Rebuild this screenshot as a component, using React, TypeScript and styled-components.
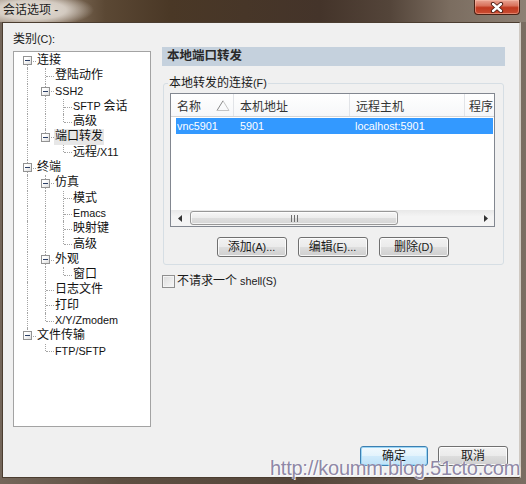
import React from 'react';
import styled, { createGlobalStyle, css } from 'styled-components';

const FONT = `"Liberation Sans", "Noto Sans CJK SC", sans-serif`;
const CJK_RE = /[\u2E80-\u9FFF\uFF00-\uFFEF\u3000-\u303F]/;
const CJK_SPLIT = /([\u2E80-\u9FFF\uFF00-\uFFEF\u3000-\u303F]+)/;

const GlobalStyle = createGlobalStyle`
  html, body { margin: 0; padding: 0; background: #ffffff; }
  body { font-family: ${FONT}; }
  * { box-sizing: border-box; }
`;

const Lat = styled.span`
  font-size: 0.9em;
`;

const T: React.FC<{ s: string }> = ({ s }) => {
  const parts = s.split(CJK_SPLIT).filter(Boolean);
  return (
    <>
      {parts.map((p, i) =>
        CJK_RE.test(p) ? <React.Fragment key={i}>{p}</React.Fragment> : <Lat key={i}>{p}</Lat>
      )}
    </>
  );
};

/* ---------- window frame ---------- */

const Window = styled.div`
  position: relative;
  width: 526px;
  height: 484px;
  display: flex;
  flex-direction: column;
  background: linear-gradient(90deg, #74665a 0, #5e4f42 120px, #55463a 300px, #6a5c50 440px, #7a6d62 526px);
  overflow: hidden;
  font-family: ${FONT};
  color: #1a1a1a;
`;

const TitleBar = styled.div`
  height: 22px;
  flex: none;
  display: flex;
  align-items: flex-start;
  justify-content: space-between;
  background:
    radial-gradient(ellipse 62px 17px at 32px 10px, rgba(232, 226, 218, 0.98) 0%, rgba(225, 218, 210, 0.85) 55%, rgba(225, 218, 210, 0) 100%),
    linear-gradient(90deg, #9c8c7c 0, #85725f 60px, #5b4834 105px, #4a3826 170px, #44342a 320px, #54453a 390px, #7b6d60 450px, #8d8175 526px);
`;

const TitleText = styled.div`
  padding-left: 3px;
  font-size: 12px;
  line-height: 20px;
  color: #1c1c1c;
`;

const CloseButton = styled.div`
  width: 46px;
  height: 15px;
  margin-right: 6px;
  display: flex;
  align-items: center;
  justify-content: center;
  border: 1px solid #4a2014;
  border-top: none;
  border-radius: 0 0 4px 4px;
  background: linear-gradient(#e9a493 0%, #d9735d 40%, #c0391f 55%, #c94d33 100%);
  box-shadow: inset 0 0 0 1px rgba(255, 200, 180, 0.45);
`;

const Client = styled.div`
  flex: 1;
  margin: 0 5px 6px 2px;
  border: 1px solid #4b3d30;
  border-right: 2px solid #cfc9c2;
  background: #f0f0f0;
  display: flex;
  flex-direction: column;
  padding: 9px 11px 11px 10px;
`;

const Main = styled.div`
  height: 395px;
  display: flex;
  gap: 11px;
`;

/* ---------- left: category tree ---------- */

const LeftCol = styled.div`
  width: 138px;
  flex: none;
  display: flex;
  flex-direction: column;
`;

const CatLabel = styled.div`
  font-size: 12px;
  line-height: 14px;
  height: 14px;
  margin-bottom: 5px;
`;

const Tree = styled.div`
  flex: 1;
  border: 1px solid #a3a3a3;
  background: #ffffff;
  padding: 1px 0 0 4px;
  font-size: 12px;
`;

const TreeRow = styled.div`
  display: flex;
  height: 15.3px;
  line-height: 15.3px;
`;

const lineColor = '#a4a4a4';

const Guide = styled.div<{ $line: boolean }>`
  position: relative;
  width: 18px;
  flex: none;
  ${(p) =>
    p.$line &&
    css`
      &::before {
        content: '';
        position: absolute;
        left: 9px;
        top: 0;
        bottom: 0;
        border-left: 1px dotted ${lineColor};
      }
    `}
`;

const Connector = styled.div<{ $top: boolean; $bottom: boolean }>`
  position: relative;
  width: 18px;
  flex: none;
  display: flex;
  align-items: center;
  justify-content: center;
  &::before {
    content: '';
    position: absolute;
    left: 9px;
    top: ${(p) => (p.$top ? '0' : '50%')};
    bottom: ${(p) => (p.$bottom ? '0' : '50%')};
    border-left: 1px dotted ${lineColor};
  }
  &::after {
    content: '';
    position: absolute;
    left: 10px;
    right: 0;
    top: 50%;
    border-top: 1px dotted ${lineColor};
  }
`;

const Expander = styled.span`
  position: relative;
  z-index: 1;
  width: 9px;
  height: 9px;
  margin-left: 1px;
  border: 1px solid #939393;
  background: linear-gradient(135deg, #ffffff 30%, #dcdcdc 100%);
  display: flex;
  align-items: center;
  justify-content: center;
  &::after {
    content: '';
    width: 5px;
    height: 1px;
    background: #2b3f66;
  }
`;

const NodeLabel = styled.span<{ $selected: boolean }>`
  padding: 0 1px;
  white-space: nowrap;
  color: #111;
  ${(p) =>
    p.$selected &&
    css`
      background: #e7e7e7;
    `}
`;

/* ---------- right panel ---------- */

const RightCol = styled.div`
  width: 343px;
  flex: none;
  padding-top: 15px;
  display: flex;
  flex-direction: column;
`;

const PanelHeader = styled.div`
  height: 19px;
  line-height: 19px;
  padding-left: 5px;
  background: #c5d1dd;
  font-size: 12.5px;
  font-weight: 600;
  color: #2a2a2a;
`;

const Group = styled.fieldset`
  margin: 10px 0 0 1px;
  width: 341px;
  border: 1px solid #d6dee4;
  border-radius: 3px;
  padding: 3px 8px 7px 6px;
  min-width: 0;
`;

const Legend = styled.legend`
  padding: 0 1px;
  margin-left: -2px;
  font-size: 12px;
  line-height: 14px;
`;

const ListView = styled.div`
  width: 325px;
  height: 134px;
  border: 1px solid #828790;
  background: #ffffff;
  display: flex;
  flex-direction: column;
`;

const HeaderRow = styled.div`
  display: grid;
  grid-template-columns: 63px 116px 115px 1fr;
  height: 23px;
  border-bottom: 1px solid #d5d5d5;
  background: linear-gradient(#ffffff, #f6f7f9);
`;

const HeaderCell = styled.div`
  display: flex;
  align-items: center;
  justify-content: space-between;
  padding: 0 3px 0 6px;
  border-right: 1px solid #e2e4e8;
  font-size: 12px;
  color: #333;
  white-space: nowrap;
  overflow: hidden;
  &:last-child {
    border-right: none;
    padding-left: 4px;
  }
`;

const DataRow = styled.div`
  display: grid;
  grid-template-columns: 58px 116px 115px 1fr;
  height: 16px;
  line-height: 16px;
  margin: 1px 1px 0 5px;
  background: #3399ff;
  color: #ffffff;
  font-size: 12px;
`;

const DataCell = styled.div<{ $pad: number }>`
  padding-left: ${(p) => p.$pad}px;
  white-space: nowrap;
  overflow: hidden;
`;

const ListBody = styled.div`
  flex: 1;
`;

const HScroll = styled.div`
  height: 16px;
  display: flex;
  align-items: center;
  background: linear-gradient(#e8e8e8, #f4f4f4 40%, #f4f4f4);
`;

const ScrollArrow = styled.div`
  width: 17px;
  height: 16px;
  flex: none;
  display: flex;
  align-items: center;
  justify-content: center;
`;

const Track = styled.div`
  flex: 1;
  height: 16px;
  display: flex;
  align-items: center;
  padding-left: 2px;
`;

const Thumb = styled.div`
  width: 208px;
  height: 14px;
  border: 1px solid #979797;
  border-radius: 3px;
  background: linear-gradient(#f7f7f7, #ececec 50%, #dedede 51%, #d6d6d6);
  box-shadow: inset 0 0 0 1px rgba(255, 255, 255, 0.7);
  display: flex;
  align-items: center;
  justify-content: center;
`;

const ButtonRow = styled.div<{ $justify: string; $gap: number; $mt: number }>`
  display: flex;
  justify-content: ${(p) => p.$justify};
  gap: ${(p) => p.$gap}px;
  margin-top: ${(p) => p.$mt}px;
`;

const Button = styled.div<{ $w: number; $default?: boolean }>`
  width: ${(p) => p.$w}px;
  height: 20px;
  border: 1px solid #707070;
  border-radius: 3px;
  background: linear-gradient(#f2f2f2 0%, #ebebeb 48%, #dddddd 52%, #cfcfcf 100%);
  box-shadow: inset 0 0 0 1px rgba(255, 255, 255, 0.8);
  font-size: 12px;
  line-height: 18px;
  text-align: center;
  color: #1a1a1a;
  ${(p) =>
    p.$default &&
    css`
      border-color: #3c7fb1;
      background: linear-gradient(#f1f9fe 0%, #e3f3fc 48%, #cfeafb 52%, #bfe2f7 100%);
      box-shadow: inset 0 0 0 1px #9cd6f5;
    `}
`;

const CheckRow = styled.div`
  display: flex;
  align-items: center;
  margin-top: 9px;
  font-size: 12px;
  line-height: 14px;
`;

const CheckBox = styled.span`
  width: 13px;
  height: 13px;
  flex: none;
  border: 1px solid #8f8f8f;
  background: linear-gradient(135deg, #dcdcdc, #f8f8f8);
  box-shadow: inset 0 0 0 1px #f4f4f4;
  margin-right: 2px;
`;

const Watermark = styled.div`
  position: absolute;
  left: 270px;
  top: 458px;
  font-family: "Liberation Sans", Arial, sans-serif;
  font-size: 20px;
  line-height: 20px;
  letter-spacing: -0.25px;
  color: #8f88a6;
  text-shadow: 1px 1px 0 rgba(255, 255, 255, 0.85), -1px 0 0 rgba(255, 255, 255, 0.6);
  white-space: nowrap;
  pointer-events: none;
`;

/* ---------- data ---------- */

type TreeNode = { label: string; selected?: boolean; children?: TreeNode[] };
type FlatRow = { node: TreeNode; guides: boolean[]; firstRoot: boolean; last: boolean };

const TREE: TreeNode[] = [
  {
    label: '连接',
    children: [
      { label: '登陆动作' },
      { label: 'SSH2', children: [{ label: 'SFTP 会话' }, { label: '高级' }] },
      { label: '端口转发', selected: true, children: [{ label: '远程/X11' }] },
    ],
  },
  {
    label: '终端',
    children: [
      {
        label: '仿真',
        children: [{ label: '模式' }, { label: 'Emacs' }, { label: '映射键' }, { label: '高级' }],
      },
      { label: '外观', children: [{ label: '窗口' }] },
      { label: '日志文件' },
      { label: '打印' },
      { label: 'X/Y/Zmodem' },
    ],
  },
  { label: '文件传输', children: [{ label: 'FTP/SFTP' }] },
];

function flatten(nodes: TreeNode[], level = 0, guides: boolean[] = [], out: FlatRow[] = []): FlatRow[] {
  nodes.forEach((n, i) => {
    const last = i === nodes.length - 1;
    out.push({ node: n, guides, firstRoot: level === 0 && i === 0, last });
    if (n.children) flatten(n.children, level + 1, [...guides, !last], out);
  });
  return out;
}

const ROWS = flatten(TREE);

const COLUMNS = ['名称', '本机地址', '远程主机', '程序'];
const ENTRY = ['vnc5901', '5901', 'localhost:5901', ''];

const SortArrow = () => (
  <svg width="14" height="11" viewBox="0 0 14 11">
    <path d="M1 10.5 L7 0.8" stroke="#8a8a8a" strokeWidth="1" fill="none" />
    <path d="M7 0.8 L13 10.5 L1 10.5" stroke="#c4c4c4" strokeWidth="1" fill="none" />
  </svg>
);

export default function App() {
  return (
    <>
      <GlobalStyle />
      <Window>
        <TitleBar>
          <TitleText>会话选项 -</TitleText>
          <CloseButton>
            <svg width="14" height="11" viewBox="0 0 14 11">
              <path d="M3 2 L11 9 M11 2 L3 9" stroke="#4a1a10" strokeWidth="4.2" strokeLinecap="round" />
              <path d="M3 2 L11 9 M11 2 L3 9" stroke="#ffffff" strokeWidth="2.4" strokeLinecap="round" />
            </svg>
          </CloseButton>
        </TitleBar>

        <Client>
          <Main>
            <LeftCol>
              <CatLabel>
                <T s="类别(C):" />
              </CatLabel>
              <Tree>
                {ROWS.map((r, i) => (
                  <TreeRow key={i}>
                    {r.guides.map((g, k) => (
                      <Guide key={k} $line={g} />
                    ))}
                    <Connector $top={!r.firstRoot} $bottom={!r.last}>
                      {r.node.children && <Expander />}
                    </Connector>
                    <NodeLabel $selected={!!r.node.selected}>
                      <T s={r.node.label} />
                    </NodeLabel>
                  </TreeRow>
                ))}
              </Tree>
            </LeftCol>

            <RightCol>
              <PanelHeader>本地端口转发</PanelHeader>
              <Group>
                <Legend>
                  <T s="本地转发的连接(F)" />
                </Legend>
                <ListView>
                  <HeaderRow>
                    {COLUMNS.map((c, i) => (
                      <HeaderCell key={c}>
                        <span>{c}</span>
                        {i === 0 && <SortArrow />}
                      </HeaderCell>
                    ))}
                  </HeaderRow>
                  <DataRow>
                    {ENTRY.map((v, i) => (
                      <DataCell key={i} $pad={i === 0 ? 1 : i === 1 ? 6 : 5}>
                        <T s={v} />
                      </DataCell>
                    ))}
                  </DataRow>
                  <ListBody />
                  <HScroll>
                    <ScrollArrow>
                      <svg width="4" height="7" viewBox="0 0 4 7">
                        <path d="M4 0 L0 3.5 L4 7 Z" fill="#333" />
                      </svg>
                    </ScrollArrow>
                    <Track>
                      <Thumb>
                        <svg width="7" height="7" viewBox="0 0 7 7">
                          <path d="M0.5 0 V7 M3.5 0 V7 M6.5 0 V7" stroke="#6f6f6f" strokeWidth="1" />
                        </svg>
                      </Thumb>
                    </Track>
                    <ScrollArrow>
                      <svg width="4" height="7" viewBox="0 0 4 7">
                        <path d="M0 0 L4 3.5 L0 7 Z" fill="#333" />
                      </svg>
                    </ScrollArrow>
                  </HScroll>
                </ListView>
                <ButtonRow $justify="center" $gap={11} $mt={10}>
                  <Button $w={70}>
                    <T s="添加(A)..." />
                  </Button>
                  <Button $w={70}>
                    <T s="编辑(E)..." />
                  </Button>
                  <Button $w={70}>
                    <T s="删除(D)" />
                  </Button>
                </ButtonRow>
              </Group>
              <CheckRow>
                <CheckBox />
                <span>
                  <T s="不请求一个 shell(S)" />
                </span>
              </CheckRow>
            </RightCol>
          </Main>

          <ButtonRow $justify="flex-end" $gap={10} $mt={19}>
            <Button $w={68} $default>
              确定
            </Button>
            <Button $w={70}>取消</Button>
          </ButtonRow>
        </Client>

        <Watermark>http://koumm.blog.51cto.com</Watermark>
      </Window>
    </>
  );
}
